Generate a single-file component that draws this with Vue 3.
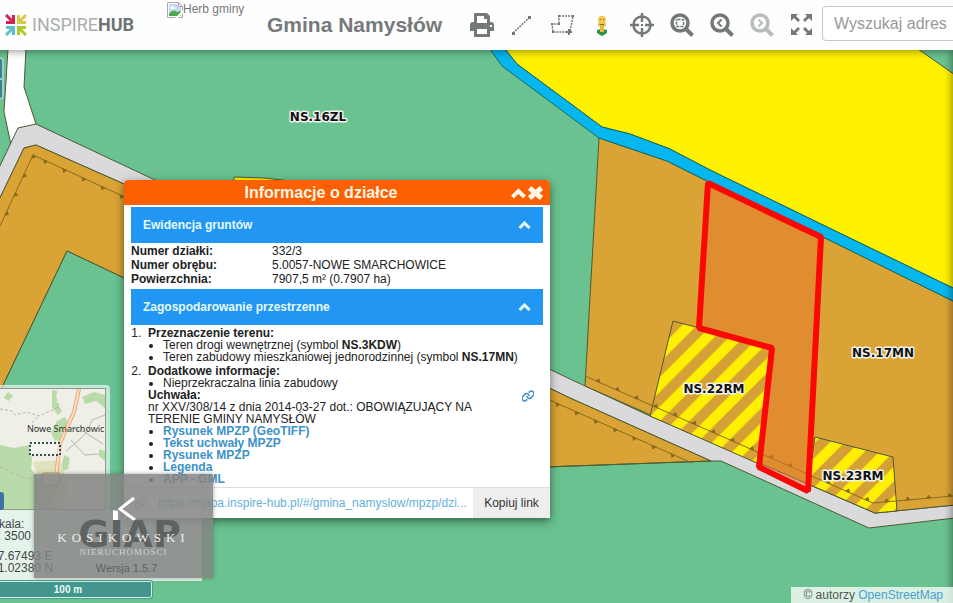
<script setup>
import { ref } from 'vue'

const parcelOpen = ref(true)
const planOpen = ref(true)
const search = ref('')

const parcel = [
  ['Numer działki:', '332/3'],
  ['Numer obrębu:', '5.0057-NOWE SMARCHOWICE'],
  ['Powierzchnia:', '7907,5 m² (0.7907 ha)']
]
const documents = ['Rysunek MPZP (GeoTIFF)', 'Tekst uchwały MPZP', 'Rysunek MPZP', 'Legenda', 'APP - GML']

const labels = [
  { text: 'NS.16ZL', x: 318, y: 121 },
  { text: 'NS.17MN', x: 883, y: 357 },
  { text: 'NS.22RM', x: 714, y: 393 },
  { text: 'NS.23RM', x: 853, y: 480 }
]

// Building lines; side is the direction in which the teeth point.
const buildingLines = [
  { points: [[0, 226], [33, 155]], side: -1 },
  { points: [[33, 155], [140, 204]], side: -1 },
  { points: [[585, 376], [873, 503]], side: 1 },
  { points: [[873, 503], [953, 496]], side: 1 },
  { points: [[545, 398], [692, 463]], side: -1 }
]

function teeth({ points, side }) {
  const [[x1, y1], [x2, y2]] = points
  const length = Math.hypot(x2 - x1, y2 - y1)
  const ux = (x2 - x1) / length
  const uy = (y2 - y1) / length
  let d = ''
  for (let s = 14; s < length; s += 21) {
    const x = x1 + ux * s
    const y = y1 + uy * s
    d += `M${x - ux * 2} ${y - uy * 2}L${x + ux * 2} ${y + uy * 2}L${x + uy * 3 * side} ${y - ux * 3 * side}Z`
  }
  return d
}
</script>

<template>
  <div class="app">
    <header class="topbar">
      <a class="logo" href="#" aria-label="InspireHub">
        <svg class="logo-mark" viewBox="0 0 22 22" aria-hidden="true">
          <g fill="none" stroke-width="3">
            <path stroke="#d5214f" d="M1 1l7 7M8.500 1v7.500H1" />
            <path stroke="#d9c94a" d="M21 1l-7 7M13.500 1v7.500H21" />
            <path stroke="#63bfd0" d="M1 21l7-7M8.500 21v-7.500H1" />
            <path stroke="#a9cc2c" d="M21 21l-7-7M13.500 21v-7.500H21" />
          </g>
        </svg>
        <span class="logo-text">INSPIRE<b>HUB</b></span>
      </a>

      <span class="crest">
        <svg viewBox="0 0 16 16" aria-hidden="true">
          <path fill="#fff" stroke="#a9a9a9" d="M.5.5h11l4 4v11H.5z" />
          <path fill="#c4d8f4" d="M2 2h9v3h3v9H2z" />
          <path fill="#fff" d="M3 6c0-2 3-3 4-1 2 0 2 2 1 2H4z" />
          <path fill="#4fa646" d="M2 14v-2c3-4 6-4 8-2l4-1v5z" />
          <path fill="#fff" d="M8 16l8-8v3l-5 5z" />
          <path fill="none" stroke="#a9a9a9" d="M11.500.500v4h4" />
        </svg>
        <span>Herb gminy</span>
      </span>

      <h1>Gmina Namysłów</h1>

      <nav class="tools">
        <button aria-label="Drukuj">
          <svg viewBox="0 0 24 24">
            <path fill="currentColor" d="M5 0h12l3 3v6h1a3 3 0 0 1 3 3v6h-4v6H4v-6H0v-6a3 3 0 0 1 3-3h1V1zM7 3v7h10V6h-3V3zM7 16v5h10v-5zM20 12v2h2v-2z" fill-rule="evenodd" />
          </svg>
        </button>
        <button aria-label="Zmierz odległość">
          <svg viewBox="0 0 24 24">
            <path fill="none" stroke="currentColor" stroke-width="1.500" stroke-dasharray="2 1" d="M3 20L20 4" />
            <path fill="currentColor" d="M2 19h3v3H2zM18 3h3v3h-3z" />
          </svg>
        </button>
        <button aria-label="Zmierz powierzchnię">
          <svg viewBox="0 0 24 24">
            <path fill="none" stroke="currentColor" stroke-width="1.500" stroke-dasharray="2 1" d="M9 3h14l-3 16H3l-1-8h7z" />
            <path fill="currentColor" d="M8 2h2v2H8zM22 2h2v2h-2zM1 10h2v2H1zM2 18h2v2H2zM8 10h2v2H8zM18 16h2v2h2v2h-2v2h-2v-2h-2v-2h2z" />
          </svg>
        </button>
        <button aria-label="Widok ulicy">
          <svg viewBox="0 0 24 24">
            <path fill="#2f9148" d="M7 17l4-1 1 2 1-2 4 1v3l-3 2-2 1-2-1-3-2z" />
            <path fill="#e6b93a" d="M9 9h6l1 3-2 2v5h-4v-5l-2-2z" />
            <circle cx="12" cy="7" r="4" fill="#efc84c" />
            <path fill="#8a6a24" d="M10 6h1v1h-1zM13 6h1v1h-1zM10 11h4v1h-4z" />
          </svg>
        </button>
        <button aria-label="Moja lokalizacja">
          <svg viewBox="0 0 24 24">
            <circle cx="12" cy="12" r="8.500" fill="none" stroke="currentColor" stroke-width="2.500" />
            <path stroke="currentColor" stroke-width="2.500" d="M12 0v9M12 15v9M0 12h9M15 12h9" />
            <path fill="currentColor" d="M11 11h2v2h-2z" />
          </svg>
        </button>
        <button aria-label="Powiększ obszar">
          <svg viewBox="0 0 24 24">
            <circle cx="10" cy="10" r="8" fill="none" stroke="currentColor" stroke-width="3.500" />
            <path stroke="currentColor" stroke-width="4" d="M15 15l7.500 7.500" />
            <rect x="6.500" y="6.500" width="7" height="7" rx="1" fill="none" stroke="currentColor" stroke-width="1.500" stroke-dasharray="3 1" />
          </svg>
        </button>
        <button aria-label="Poprzedni widok">
          <svg viewBox="0 0 24 24">
            <circle cx="10" cy="10" r="8" fill="none" stroke="currentColor" stroke-width="3.500" />
            <path stroke="currentColor" stroke-width="4" d="M15 15l7.500 7.500" />
            <path fill="none" stroke="currentColor" stroke-width="2" d="M11.500 6.500L8 10l3.500 3.500" />
          </svg>
        </button>
        <button aria-label="Następny widok" class="off">
          <svg viewBox="0 0 24 24">
            <circle cx="10" cy="10" r="8" fill="none" stroke="currentColor" stroke-width="3.500" />
            <path stroke="currentColor" stroke-width="4" d="M15 15l7.500 7.500" />
            <path fill="none" stroke="currentColor" stroke-width="2" d="M8.500 6.500L12 10l-3.500 3.500" />
          </svg>
        </button>
        <button aria-label="Pełny ekran">
          <svg viewBox="0 0 24 24">
            <path fill="currentColor" d="M1 1h7L6 3l4 4-2 2-4-4-3 3zM22 1v7l-3-3-4 4-2-2 4-4-2-2zM1 22v-7l3 3 4-4 2 2-4 4 2 2zM22 22h-7l2-2-4-4 2-2 4 4 3-3z" />
          </svg>
        </button>
      </nav>
      <input v-model="search" class="search" type="search" placeholder="Wyszukaj adres" aria-label="Wyszukaj adres" />
    </header>

    <main class="map">
      <svg class="canvas" viewBox="0 50 953 553" preserveAspectRatio="xMinYMin slice" role="img" aria-label="Mapa planu">
        <defs>
          <pattern id="farm" width="20" height="20" patternUnits="userSpaceOnUse" patternTransform="rotate(45) scale(1.04)">
            <rect width="20" height="20" fill="#d5a136" />
            <rect x="5" width="10" height="20" fill="#fff000" />
          </pattern>
        </defs>
        <rect y="50" width="953" height="553" fill="#69c290" />
        <g stroke="#4d5b33" stroke-width="1">
          <path fill="#fff" d="M8 49H26L24 87 36 124 11 145 4 112Z" />
          <path fill="#dad9dc" d="M-2 170L18 128 36 124 155 180 570 379 650 416 757 462 875 513 955 505V518L869 528 721 461H711L570 398 124 184 36 145 24 148-2 202Z" />
          <path fill="#daa335" d="M-2 202L24 148 36 145 124 184 570 398 711 461 545 467 124 278 67 251-2 396Z" />
          <path fill="#69c290" d="M67 251L-2 396V604H545V467L124 278Z" stroke="none" />
          <path fill="none" d="M124 278L67 251-2 396M711 461L545 467" />
          <path fill="#fff100" d="M234 182V177L264 178 300 182Z" />
          <path fill="#fff200" d="M505 49L517 64 602 127 630 134 670 149 710 170 823 225 955 289V75L918 49Z" />
          <path fill="#daa335" d="M599 138L667 161 705 180 823 237 955 302V505L875 513 757 462 585 386Z" />
          <path fill="#06b6ee" stroke="#176b63" d="M490 49L502 66 599 138 667 161 705 180 823 237 955 302V289L823 225 710 170 670 149 630 134 602 127 517 64 505 49Z" />
          <path fill="url(#farm)" d="M673 321L772 347 759 464 650 416Z" />
          <path fill="url(#farm)" d="M815 437L893 457 897 511 875 513 808 484Z" />
        </g>
        <g class="building">
          <template v-for="(line, i) in buildingLines" :key="i">
            <polyline :points="line.points.join(' ')" />
            <path :d="teeth(line)" />
          </template>
        </g>
        <path fill="#e5762c" fill-opacity=".5" stroke="#fb0704" stroke-width="6" stroke-linejoin="bevel" d="M708 183L821 237 808 491 759 467 772 348 699 328Z" />
        <text v-for="label in labels" :key="label.text" class="zone" :x="label.x" :y="label.y">{{ label.text }}</text>
      </svg>
      <div class="edge"></div>

      <button class="zoom-control" aria-label="Powiększ"></button>

      <aside class="corner">
        <div class="overview">
          <svg viewBox="0 0 105 120" preserveAspectRatio="xMaxYMin slice" aria-hidden="true">
            <rect width="105" height="120" fill="#efefe7" />
            <g fill="#b9dba9">
              <path d="M0 56l14 3 15-3 3 15-1 9 7 9 14 4v27H0zM8 3l5 4-4 5-5-3zM52 1l5 1-1 10 6 10-4 4-6-8zM57 32l8-4 4 7-8 9 4 6-10 2-4-8zM82 8l12-5 11 3v13l-9-7-11 3zM64 66l6 3-2 11-8 3zM99 60l6 2v10l-6-5z" />
              <path d="M33 73l27-2 8 24-4 25H52V93l-14-4z" fill="#dfe2bd" />
            </g>
            <g fill="none" stroke="#b7b8b4">
              <path d="M0 20l12 2 3 4 12-3 12 4 20-9-3-10M32 34l7-8" stroke-dasharray="3 2" />
              <path d="M68 38l15 4 20 13M66 62l12-10 9-9 5-12 13-5M71 51l14 15 14-1" />
              <path d="M0 78l25 11 30 4" stroke-dasharray="4 2" />
            </g>
            <path fill="none" stroke="#eaa77a" stroke-width="4" d="M79 0L74 23 60 54 52 120" />
            <path fill="none" stroke="#fae0c1" stroke-width="2" d="M79 0L74 23 60 54 52 120" />
            <rect x="42" y="84" width="18" height="12" rx="2" fill="#e7dcb6" stroke="#c0906c" />
            <rect x="30" y="54" width="30" height="12" fill="#fff" fill-opacity=".4" stroke="#35504f" stroke-width="2" stroke-dasharray="2 2" />
            <text x="27" y="43">Nowe Smarchowic</text>
          </svg>
          <button aria-label="Zwiń mapę poglądową"></button>
        </div>
        <div class="info">
          <p>Skala:<br />1: 3500</p>
          <p>17.67493 E<br />51.02380 N</p>
        </div>
        <div class="scale">100 m</div>
      </aside>

      <section class="popup">
        <header class="popup-head">
          <h2>Informacje o działce</h2>
          <button aria-label="Zwiń">
            <svg viewBox="0 0 16 14"><path fill="none" stroke="currentColor" stroke-width="4" d="M2 11l6-6 6 6" /></svg>
          </button>
          <button aria-label="Zamknij">
            <svg viewBox="0 0 16 14"><path fill="none" stroke="currentColor" stroke-width="5" d="M2 2l12 10M14 2L2 12" /></svg>
          </button>
        </header>
        <div class="popup-body">
          <button class="bar" @click="parcelOpen = !parcelOpen">
            <span>Ewidencja gruntów</span>
            <svg viewBox="0 0 12 8"><path fill="none" stroke="currentColor" stroke-width="3" d="M1 7l5-5 5 5" /></svg>
          </button>
          <table v-if="parcelOpen">
            <tbody>
              <tr v-for="[name, value] in parcel" :key="name">
                <th scope="row">{{ name }}</th>
                <td>{{ value }}</td>
              </tr>
            </tbody>
          </table>
          <button class="bar" @click="planOpen = !planOpen">
            <span>Zagospodarowanie przestrzenne</span>
            <svg viewBox="0 0 12 8"><path fill="none" stroke="currentColor" stroke-width="3" d="M1 7l5-5 5 5" /></svg>
          </button>
          <div v-if="planOpen" class="plan">
            <ol>
              <li>
                <b>Przeznaczenie terenu:</b>
                <ul>
                  <li>Teren drogi wewnętrznej (symbol <b>NS.3KDW</b>)</li>
                  <li>Teren zabudowy mieszkaniowej jednorodzinnej (symbol <b>NS.17MN</b>)</li>
                </ul>
              </li>
              <li>
                <b>Dodatkowe informacje:</b>
                <ul>
                  <li>Nieprzekraczalna linia zabudowy</li>
                </ul>
                <b>Uchwała:</b>
                <p>nr XXV/308/14 z dnia 2014-03-27 dot.: OBOWIĄZUJĄCY NA TERENIE GMINY NAMYSŁÓW</p>
                <ul>
                  <li v-for="doc in documents" :key="doc"><a href="#">{{ doc }}</a></li>
                </ul>
              </li>
            </ol>
            <a class="chain" href="#" aria-label="Odnośnik">
              <svg viewBox="0 0 12 12">
                <g fill="none" stroke="currentColor" stroke-width="1.500" transform="rotate(-50 6 6)">
                  <path d="M3 7.500H2a2.500 2.500 0 0 1 0-5h3a2.500 2.500 0 0 1 1.500 4.500" />
                  <path d="M9 4.500h1a2.500 2.500 0 0 1 0 5H7a2.500 2.500 0 0 1-1.500-4.500" />
                </g>
              </svg>
            </a>
          </div>
        </div>
        <footer class="share">
          <svg viewBox="0 0 12 12" aria-hidden="true">
            <g fill="none" stroke="currentColor" transform="rotate(-50 6 6)">
              <path d="M3 7.500H2a2.500 2.500 0 0 1 0-5h3a2.500 2.500 0 0 1 1.500 4.500" />
              <path d="M9 4.500h1a2.500 2.500 0 0 1 0 5H7a2.500 2.500 0 0 1-1.500-4.500" />
            </g>
          </svg>
          <a href="#">https://mapa.inspire-hub.pl/#/gmina_namyslow/mpzp/dzi...</a>
          <button>Kopiuj link</button>
        </footer>
      </section>

      <div class="agency">
        <svg viewBox="0 0 24 24" aria-hidden="true">
          <path fill="none" stroke="#fff" stroke-width="3" d="M22 1L8 12l15 11" />
          <path fill="#fff" d="M1 13l5 1v10H1z" />
        </svg>
        <span class="giap">GIAP</span>
        <strong>KOSIKOWSKI</strong>
        <small>NIERUCHOMOŚCI</small>
        <span class="version">Wersja 1.5.7</span>
      </div>

      <div class="credits">© autorzy <a href="#">OpenStreetMap</a></div>
    </main>
  </div>
</template>

<style>
body {
  margin: 0;
  overflow: hidden;
}
</style>

<style scoped>
.app {
  display: flex;
  flex-direction: column;
  height: 100vh;
  overflow: hidden;
  font: 12px/14px "Liberation Sans", Arial, sans-serif;
  color: #222;
}
button {
  margin: 0;
  padding: 0;
  border: 0;
  background: none;
  font: inherit;
  color: inherit;
  cursor: pointer;
}
a {
  color: #3c92c8;
  text-decoration: none;
}
h1,
h2,
p,
ul,
ol {
  margin: 0;
}

.topbar {
  display: grid;
  grid-template-columns: 162px 100px 200px 360px minmax(240px, 1fr);
  align-items: center;
  height: 50px;
  flex: none;
  background: #fefefe;
}
.logo {
  display: flex;
  align-items: center;
  gap: 5px;
  padding-left: 5px;
  color: #a9adad;
}
.logo-mark {
  width: 22px;
  height: 22px;
}
.logo-text {
  font: 18px/24px Roboto, "Liberation Sans", sans-serif;
}
.logo-text b {
  color: #6d7374;
}
.crest {
  display: flex;
  align-self: start;
  padding: 2px 0 0 5px;
  color: #777;
  white-space: nowrap;
}
.crest svg {
  width: 16px;
  height: 16px;
}
h1 {
  padding-left: 5px;
  font-size: 21px;
  line-height: 24px;
  color: #757a7a;
  white-space: nowrap;
}
.tools {
  display: grid;
  grid-template-columns: repeat(9, 40px);
  color: #737879;
}
.tools button {
  display: flex;
  justify-content: center;
}
.tools svg {
  width: 24px;
  height: 24px;
}
.tools .off {
  color: #b9bcbc;
}
.search {
  box-sizing: border-box;
  width: 100%;
  height: 35px;
  margin: 0 0 3px;
  padding: 0 11px;
  border: 1px solid #c8c8c8;
  border-radius: 4px;
  background: #fff;
  font: 16px "Liberation Sans", Arial, sans-serif;
}
.search::placeholder {
  color: #999;
}

.map {
  position: relative;
  flex: 1;
  overflow: hidden;
  background: #69c290;
}
.canvas {
  display: block;
  width: 100%;
  height: 100%;
}
.building {
  fill: #8a6a1e;
  stroke: #8a6a1e;
  stroke-width: 1;
}
.zone {
  font: bold 12px "DejaVu Sans", sans-serif;
  text-anchor: middle;
  fill: #111;
  stroke: #f2f2ee;
  stroke-width: 3px;
  stroke-linejoin: round;
  paint-order: stroke;
}
.edge {
  position: absolute;
  inset: 0 0 -20px -20px;
  box-shadow: inset 0 0 8px 1px rgba(0, 0, 0, 0.45);
  pointer-events: none;
}
.zoom-control {
  position: absolute;
  left: -28px;
  top: 7px;
  width: 32px;
  height: 43px;
  border: 2px solid #9ccfc9;
  border-radius: 4px;
  background: linear-gradient(#3d838f 19px, #9ccfc9 19px 21px, #3d838f 21px);
}

.corner {
  position: absolute;
  left: 0;
  bottom: 5px;
}
.overview {
  position: relative;
  box-sizing: border-box;
  width: 110px;
  height: 125px;
  padding: 4px 5px 1px 0;
  border-radius: 0 4px 0 0;
  background: rgba(255, 255, 255, 0.6);
}
.overview svg {
  display: block;
  width: 105px;
  height: 120px;
  outline: 1px solid #8d9a92;
}
.overview text {
  font: 9px "Noto Sans", sans-serif;
  fill: #333;
}
.overview button {
  position: absolute;
  left: -14px;
  bottom: 0;
  width: 18px;
  height: 18px;
  border-radius: 3px;
  background: #3f70a6;
}
.info {
  display: flex;
  flex-direction: column;
  gap: 8px;
  box-sizing: border-box;
  width: 202px;
  height: 71px;
  padding-top: 8px;
  background: rgba(255, 255, 255, 0.82);
  color: #444;
  line-height: 12px;
}
.info p {
  margin-left: -9px;
}
.scale {
  box-sizing: border-box;
  width: 168px;
  margin-left: -16px;
  border: 1px solid #d7eee6;
  box-shadow: 0 0 0 1px #4a9a90;
  border-radius: 2px;
  background: #43968d;
  color: #eefaf5;
  font-weight: bold;
  font-size: 10px;
  line-height: 15px;
  text-align: center;
}

.popup {
  position: absolute;
  left: 124px;
  top: 130px;
  width: 426px;
  border-radius: 4px 4px 0 0;
  background: #fff;
  box-shadow: 0 3px 10px rgba(0, 0, 0, 0.5);
}
.popup-head {
  display: flex;
  align-items: center;
  height: 25px;
  padding-right: 6px;
  border-radius: 4px 4px 0 0;
  background: #fb6002;
  color: #fff5e6;
}
.popup-head h2 {
  flex: 1;
  padding-left: 8px;
  font-size: 16px;
  line-height: 25px;
  text-align: center;
}
.popup-head button {
  display: flex;
}
.popup-head svg {
  width: 17px;
  height: 14px;
}
.popup-body {
  padding: 2px 7px 2px;
}
.bar {
  display: flex;
  align-items: center;
  justify-content: space-between;
  width: 100%;
  height: 36px;
  padding: 0 12px;
  background: #2196f3;
  color: #e6fbff;
  font-weight: bold;
}
.bar svg {
  width: 13px;
  height: 8px;
}
table {
  margin: 1px 0 3px;
  border-collapse: collapse;
}
th,
td {
  padding: 0;
  text-align: left;
}
th {
  width: 141px;
}
.plan {
  display: flex;
  align-items: center;
  padding-top: 2px;
  line-height: 12px;
}
ol {
  flex: 1;
  padding-left: 17px;
}
ol > li::marker {
  content: counter(list-item) ".\00a0\00a0";
}
ol > li + li {
  margin-top: 2px;
}
ul {
  padding-left: 15px;
  list-style: disc;
}
ul > li + li {
  margin-top: 0;
}
ol p {
  max-width: 340px;
}
ul a {
  font-weight: bold;
}
.chain {
  align-self: start;
  padding: 63px 9px 0 0;
}
.chain svg {
  display: block;
  width: 12px;
  height: 12px;
}
.share {
  display: flex;
  align-items: center;
  height: 30px;
  border-top: 1px solid #ddd;
  padding-left: 11px;
  color: #9a9a9a;
}
.share svg {
  flex: none;
  width: 12px;
  height: 12px;
  margin-right: 11px;
}
.share a {
  flex: 1;
  overflow: hidden;
  color: #64b1dc;
  text-overflow: ellipsis;
  white-space: nowrap;
}
.share button {
  align-self: stretch;
  width: 77px;
  background: #eee;
  color: #333;
}

.agency {
  position: absolute;
  left: 34px;
  bottom: 25px;
  display: grid;
  grid-template-rows: 22px 26px 24px 12px 20px;
  justify-items: center;
  align-items: center;
  width: 179px;
  background: rgba(131, 133, 132, 0.86);
  box-shadow: 0 0 4px rgba(60, 80, 70, 0.5);
  color: #eee;
  white-space: nowrap;
}
.agency svg {
  grid-row: 2;
  grid-column: 1;
  width: 24px;
  height: 24px;
}
.agency .giap {
  grid-row: 3;
  grid-column: 1;
  padding-left: 12px;
  color: #5e6361;
  font: bold 38px/24px "DejaVu Sans", sans-serif;
}
.agency strong {
  grid-row: 3;
  grid-column: 1;
  align-self: end;
  font: 13px/16px "Liberation Serif", serif;
  letter-spacing: 5px;
}
.agency small {
  grid-row: 4;
  grid-column: 1;
  color: #d2d2d2;
  font: 9px/12px "Liberation Serif", serif;
  letter-spacing: 1px;
}
.agency .version {
  grid-row: 5;
  grid-column: 1;
  padding-left: 6px;
  color: #5e6261;
  font-size: 11px;
}

.credits {
  position: absolute;
  right: 0;
  bottom: 0;
  padding: 1px 10px 1px 12px;
  background: rgba(255, 255, 255, 0.75);
  color: #555;
}
.credits a {
  color: #4a9fd0;
}
</style>
